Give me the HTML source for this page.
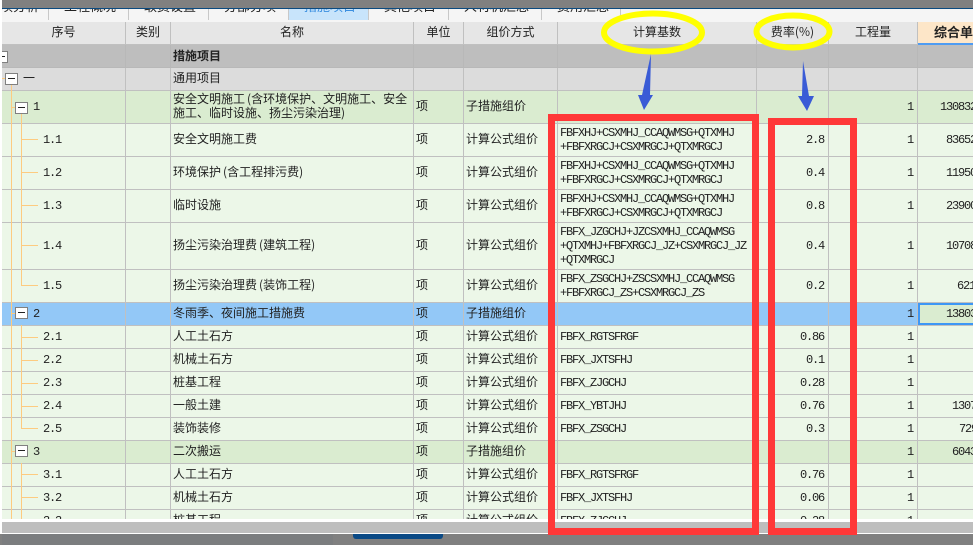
<!DOCTYPE html>
<html><head><meta charset="utf-8">
<style>
html,body{margin:0;padding:0;background:#fff}
#p{position:relative;width:973px;height:545px;overflow:hidden;background:#fff;font-family:"WenQuanYi Zen Hei","Noto Sans CJK SC",sans-serif;font-size:12px;color:#222}
.a{position:absolute}
#tabs{left:2px;top:0;width:971px;height:22px;background:#f5f5f5;overflow:hidden}
#tabs i{position:absolute;top:0;height:20px;width:1px;background:#c8c8c8}
#tabs span{position:absolute;top:2px;line-height:14px;font-size:13px;font-style:normal}
table{border-collapse:separate;border-spacing:0;table-layout:fixed;width:1018px}
td{box-sizing:border-box;border-right:1px solid #c0c0c0;border-bottom:1px solid #c0c0c0;padding:0 0 2px 2px;white-space:nowrap;overflow:hidden;line-height:14px;vertical-align:middle}
#hd td{background:#e6e6e6;text-align:center;padding:0 0 2px;height:23px;font-size:12px}
.m{font-family:"Liberation Mono",monospace;font-size:12px;letter-spacing:-1.2px;padding-bottom:0}
.f{padding-left:2px;line-height:14px}
.r{text-align:right;padding-right:4px}
.q{text-align:right;padding-right:4px}
.l td{background:#ecf7e8}
.g td{background:#daecd0}
.b td{background:#93c8f7}
.s td{background:#bebebe;border-color:#b8b8b8}
.t td{background:#dcdcdc}
.x{padding-left:31px!important}
.z{padding-left:41px!important}
.po{padding-left:2px}
.pc{padding-right:2px}
.box{position:absolute;width:11px;height:10px;background:#fff;border:1px solid #808080}
.box:after{content:"";position:absolute;left:2px;top:4px;width:7px;height:1px;background:#222}
.o{position:absolute;background:#fdcb80}
</style></head><body><div id="p">
<div class="a" id="tabs">
<span style="left:-2px;top:-1px">项分析</span><i style="left:46px"></i>
<span style="left:62px;top:-1px">工程概况</span><i style="left:126px"></i>
<span style="left:142px;top:-1px">取费设置</span><i style="left:206px"></i>
<span style="left:222px;top:-1px">分部分项</span><i style="left:286px"></i>
<div class="a" style="left:287px;top:0;width:80px;height:20px;background:#c8e4fb"></div>
<span style="left:302px;top:-1px;color:#3b8fe0">措施项目</span><i style="left:366px"></i>
<span style="left:382px;top:-1px">其他项目</span><i style="left:446px"></i>
<span style="left:462px;top:-1px">人材机汇总</span><i style="left:539px"></i>
<span style="left:555px;top:-1px">费用汇总</span><i style="left:618px"></i>
</div>
<div class="a" style="left:0;top:0;width:973px;height:8px;background:#808080"></div>
<div class="a" style="left:0;top:8px;width:973px;height:1px;background:#0a4a80"></div>

<div class="a" style="left:2px;top:22px;width:971px;height:497px;overflow:hidden">
<table id="hd"><colgroup><col style="width:124px"><col style="width:45px"><col style="width:243px"><col style="width:50px"><col style="width:94px"><col style="width:199px"><col style="width:72px"><col style="width:89px"><col style="width:102px"></colgroup>
<tr><td>序号</td><td>类别</td><td>名称</td><td>单位</td><td>组价方式</td><td>计算基数</td><td>费率(%)</td><td>工程量</td><td style="background:#fde6c8;border-bottom:2px solid #4f9cf2;text-align:left;padding-left:16px;font-weight:bold;font-size:13px">综合单价</td></tr>
</table>
<table><colgroup><col style="width:124px"><col style="width:45px"><col style="width:243px"><col style="width:50px"><col style="width:94px"><col style="width:199px"><col style="width:72px"><col style="width:89px"><col style="width:102px"></colgroup>
<tr class="s" style="height:23px"><td></td><td></td><td style="font-weight:bold;font-size:12px;padding-bottom:1px">措施项目</td><td></td><td></td><td></td><td></td><td></td><td></td></tr>
<tr class="t" style="height:23px"><td style="padding-left:21px">一</td><td></td><td>通用项目</td><td></td><td></td><td></td><td></td><td></td><td></td></tr>
<tr class="g" style="height:33px"><td class="m x">1</td><td></td><td style="line-height:14px">安全文明施工<span class="po">(</span>含环境保护、文明施工、安全<br>施工、临时设施、扬尘污染治理<span class="pc">)</span></td><td>项</td><td>子措施组价</td><td></td><td></td><td class="m q">1</td><td class="m" style="padding-left:22px">130832</td></tr>
<tr class="l" style="height:33px"><td class="m z">1.1</td><td></td><td>安全文明施工费</td><td>项</td><td>计算公式组价</td><td class="m f">FBFXHJ+CSXMHJ_CCAQWMSG+QTXMHJ<br>+FBFXRGCJ+CSXMRGCJ+QTXMRGCJ</td><td class="m r">2.8</td><td class="m q">1</td><td class="m" style="padding-left:28px">83652</td></tr>
<tr class="l" style="height:33px"><td class="m z">1.2</td><td></td><td>环境保护<span class="po">(</span>含工程排污费<span class="pc">)</span></td><td>项</td><td>计算公式组价</td><td class="m f">FBFXHJ+CSXMHJ_CCAQWMSG+QTXMHJ<br>+FBFXRGCJ+CSXMRGCJ+QTXMRGCJ</td><td class="m r">0.4</td><td class="m q">1</td><td class="m" style="padding-left:28px">11950</td></tr>
<tr class="l" style="height:33px"><td class="m z">1.3</td><td></td><td>临时设施</td><td>项</td><td>计算公式组价</td><td class="m f">FBFXHJ+CSXMHJ_CCAQWMSG+QTXMHJ<br>+FBFXRGCJ+CSXMRGCJ+QTXMRGCJ</td><td class="m r">0.8</td><td class="m q">1</td><td class="m" style="padding-left:28px">23900</td></tr>
<tr class="l" style="height:47px"><td class="m z">1.4</td><td></td><td>扬尘污染治理费<span class="po">(</span>建筑工程<span class="pc">)</span></td><td>项</td><td>计算公式组价</td><td class="m f">FBFX_JZGCHJ+JZCSXMHJ_CCAQWMSG<br>+QTXMHJ+FBFXRGCJ_JZ+CSXMRGCJ_JZ<br>+QTXMRGCJ</td><td class="m r">0.4</td><td class="m q">1</td><td class="m" style="padding-left:28px">10708</td></tr>
<tr class="l" style="height:33px"><td class="m z">1.5</td><td></td><td>扬尘污染治理费<span class="po">(</span>装饰工程<span class="pc">)</span></td><td>项</td><td>计算公式组价</td><td class="m f">FBFX_ZSGCHJ+ZSCSXMHJ_CCAQWMSG<br>+FBFXRGCJ_ZS+CSXMRGCJ_ZS</td><td class="m r">0.2</td><td class="m q">1</td><td class="m" style="padding-left:39px">621</td></tr>
<tr class="b" style="height:23px"><td class="m x">2</td><td></td><td>冬雨季、夜间施工措施费</td><td>项</td><td>子措施组价</td><td></td><td></td><td class="m q">1</td><td class="m" style="padding-left:28px;background:#daecd0;box-shadow:inset 0 0 0 2px #3d97f5">13803</td></tr>
<tr class="l" style="height:23px"><td class="m z">2.1</td><td></td><td>人工土石方</td><td>项</td><td>计算公式组价</td><td class="m f">FBFX_RGTSFRGF</td><td class="m r">0.86</td><td class="m q">1</td><td></td></tr>
<tr class="l" style="height:23px"><td class="m z">2.2</td><td></td><td>机械土石方</td><td>项</td><td>计算公式组价</td><td class="m f">FBFX_JXTSFHJ</td><td class="m r">0.1</td><td class="m q">1</td><td></td></tr>
<tr class="l" style="height:23px"><td class="m z">2.3</td><td></td><td>桩基工程</td><td>项</td><td>计算公式组价</td><td class="m f">FBFX_ZJGCHJ</td><td class="m r">0.28</td><td class="m q">1</td><td></td></tr>
<tr class="l" style="height:23px"><td class="m z">2.4</td><td></td><td>一般土建</td><td>项</td><td>计算公式组价</td><td class="m f">FBFX_YBTJHJ</td><td class="m r">0.76</td><td class="m q">1</td><td class="m" style="padding-left:34px">1307</td></tr>
<tr class="l" style="height:23px"><td class="m z">2.5</td><td></td><td>装饰装修</td><td>项</td><td>计算公式组价</td><td class="m f">FBFX_ZSGCHJ</td><td class="m r">0.3</td><td class="m q">1</td><td class="m" style="padding-left:41px">729</td></tr>
<tr class="g" style="height:23px"><td class="m x">3</td><td></td><td>二次搬运</td><td>项</td><td>子措施组价</td><td></td><td></td><td class="m q">1</td><td class="m" style="padding-left:34px">6043</td></tr>
<tr class="l" style="height:23px"><td class="m z">3.1</td><td></td><td>人工土石方</td><td>项</td><td>计算公式组价</td><td class="m f">FBFX_RGTSFRGF</td><td class="m r">0.76</td><td class="m q">1</td><td></td></tr>
<tr class="l" style="height:23px"><td class="m z">3.2</td><td></td><td>机械土石方</td><td>项</td><td>计算公式组价</td><td class="m f">FBFX_JXTSFHJ</td><td class="m r">0.06</td><td class="m q">1</td><td></td></tr>
<tr class="l" style="height:23px"><td class="m z">3.3</td><td></td><td>桩基工程</td><td>项</td><td>计算公式组价</td><td class="m f">FBFX_ZJGCHJ</td><td class="m r">0.28</td><td class="m q">1</td><td></td></tr>
</table>
</div>

<div class="o" style="left:11px;top:85px;width:1px;height:434px"></div>
<div class="o" style="left:2px;top:78px;width:3px;height:1px"></div>
<div class="o" style="left:21px;top:113px;width:1px;height:172px"></div>
<div class="o" style="left:21px;top:325px;width:1px;height:103px"></div>
<div class="o" style="left:21px;top:463px;width:1px;height:56px"></div>
<div class="o" style="left:11px;top:107px;width:4px;height:1px"></div>
<div class="o" style="left:11px;top:313px;width:4px;height:1px"></div>
<div class="o" style="left:11px;top:451px;width:4px;height:1px"></div>
<div class="o" style="left:21px;top:139px;width:17px;height:1px"></div>
<div class="o" style="left:21px;top:172px;width:17px;height:1px"></div>
<div class="o" style="left:21px;top:205px;width:17px;height:1px"></div>
<div class="o" style="left:21px;top:245px;width:17px;height:1px"></div>
<div class="o" style="left:21px;top:285px;width:17px;height:1px"></div>
<div class="o" style="left:21px;top:337px;width:17px;height:1px"></div>
<div class="o" style="left:21px;top:360px;width:17px;height:1px"></div>
<div class="o" style="left:21px;top:383px;width:17px;height:1px"></div>
<div class="o" style="left:21px;top:406px;width:17px;height:1px"></div>
<div class="o" style="left:21px;top:428px;width:17px;height:1px"></div>
<div class="o" style="left:21px;top:474px;width:17px;height:1px"></div>
<div class="o" style="left:21px;top:497px;width:17px;height:1px"></div>
<div class="box" style="left:-5px;top:51px"></div>
<div class="box" style="left:5px;top:73px"></div>
<div class="box" style="left:15px;top:102px"></div>
<div class="box" style="left:15px;top:307px"></div>
<div class="box" style="left:15px;top:445px"></div>

<div class="a" style="left:0;top:0;width:2px;height:534px;background:#fff"></div>
<div class="a" style="left:2px;top:522px;width:971px;height:11px;background:#bebebe"></div>
<div class="a" style="left:2px;top:534px;width:331px;height:11px;background:#7b7d7f"></div>
<div class="a" style="left:333px;top:534px;width:640px;height:11px;background:#808080"></div>
<div class="a" style="left:0;top:534px;width:2px;height:11px;background:#808080"></div>
<div class="a" style="left:353px;top:534px;width:90px;height:5px;background:#0a4a86;border-radius:0 0 3px 3px"></div>

<svg class="a" style="left:0;top:0" width="973" height="545" viewBox="0 0 973 545">
<rect x="551.5" y="117.5" width="204" height="414" fill="none" stroke="#ff3838" stroke-width="7"/>
<rect x="771.5" y="121.5" width="82" height="410" fill="none" stroke="#ff3838" stroke-width="7"/>
<ellipse cx="653" cy="32.5" rx="49" ry="19" fill="none" stroke="#ffff00" stroke-width="6"/>
<ellipse cx="793" cy="31.5" rx="36.5" ry="16" fill="none" stroke="#ffff00" stroke-width="6"/>
<polygon points="651,54 650,95 653,95 644,110 638,95 642,95" fill="#3a5bd6"/>
<polygon points="803,61 809,96 814,96 807,111 798,96 802,96" fill="#3a5bd6"/>
</svg>
</div></body></html>
